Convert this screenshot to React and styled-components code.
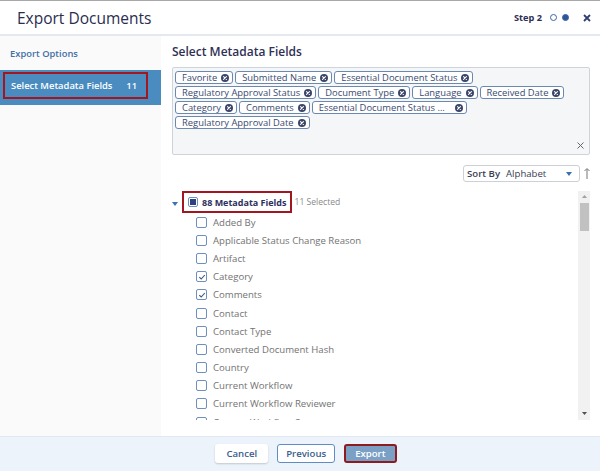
import React from "react";
import styled, { createGlobalStyle, css } from "styled-components";

const GlobalStyle = createGlobalStyle`
  html, body { margin: 0; padding: 0; background: #fff; }
  body { font-family: "Open Sans", "Noto Sans", sans-serif; }
  * { box-sizing: border-box; }
`;

const Dialog = styled.div`
  width: 600px;
  height: 471px;
  display: flex;
  flex-direction: column;
  border-top: 1px solid #a8a8a8;
  overflow: hidden;
  background: #fff;
`;

const Header = styled.header`
  height: 35px;
  flex-shrink: 0;
  display: flex;
  align-items: center;
  padding: 0 9px 0 17px;
  border-bottom: 2px solid #e4e9ef;
`;

const Title = styled.h1`
  margin: 0;
  flex: 1;
  font-size: 15.5px;
  font-weight: 400;
  color: #2b2d50;
`;

const StepInfo = styled.div`
  display: flex;
  align-items: center;
  gap: 5px;
  font-size: 9.2px;
  font-weight: 700;
  color: #2d2f55;
`;

const Dot = styled.span`
  width: 7px;
  height: 7px;
  border-radius: 50%;
  border: 1px solid #3a66a8;
  background: ${(p) => (p.$filled ? "#2f5597" : "#fff")};
  margin-left: ${(p) => (p.$first ? "3px" : "0")};
`;

const CloseButton = styled.span`
  display: flex;
  margin-left: 14px;
`;

const Body = styled.div`
  height: 400px;
  flex-shrink: 0;
  display: flex;
`;

const Sidebar = styled.nav`
  width: 161px;
  flex-shrink: 0;
  background: #fafafa;
  display: flex;
  flex-direction: column;
`;

const NavItem = styled.div`
  height: ${(p) => (p.$active ? "35px" : "34px")};
  display: flex;
  align-items: center;
  padding-left: 10px;
  font-size: 9.4px;
  font-weight: 600;
  color: #3f70a6;
  ${(p) =>
    p.$active &&
    css`
      background: #4a8cc0;
      color: #fff;
      padding: 2px 13px 6px 3px;
      align-items: stretch;
    `}
`;

const ActiveOutline = styled.div`
  flex: 1;
  display: flex;
  align-items: center;
  justify-content: space-between;
  padding: 0 9px 0 6px;
  border: 2px solid #a3151f;
`;

const Main = styled.main`
  flex: 1;
  display: flex;
  flex-direction: column;
  padding: 7px 10px 0 11px;
`;

const SectionTitle = styled.h2`
  margin: 0;
  height: 18px;
  line-height: 18px;
  font-size: 12px;
  font-weight: 600;
  color: #2f3055;
`;

const TagBox = styled.div`
  margin-top: 6px;
  height: 88px;
  position: relative;
  background: #f5f6f8;
  border: 1px solid #cfd4db;
  border-radius: 2px;
  padding: 3px 2px;
  display: flex;
  flex-wrap: wrap;
  align-content: flex-start;
  gap: 2px 2px;
`;

const Tag = styled.span`
  height: 13px;
  display: inline-flex;
  align-items: center;
  gap: 4px;
  padding: 0 3px 0 6px;
  border: 1px solid #6b88b0;
  border-radius: 3px;
  background: #fff;
  font-size: 9.4px;
  line-height: 11px;
  color: #3a4a70;
  white-space: nowrap;
`;

const TagRemove = styled.svg`
  width: 8px;
  height: 8px;
  flex-shrink: 0;
  margin-left: ${(p) => (p.$wide ? "6px" : "0")};
`;

const ClearAll = styled.svg`
  position: absolute;
  right: 5px;
  bottom: 5px;
  width: 7px;
  height: 7px;
`;

const SortRow = styled.div`
  margin-top: 10px;
  display: flex;
  justify-content: flex-end;
  align-items: center;
  gap: 4px;
`;

const SortSelect = styled.div`
  width: 117px;
  height: 17px;
  display: flex;
  align-items: center;
  padding: 0 7px 0 3px;
  border: 1px solid #ccd1d8;
  border-radius: 3px;
  font-size: 9.6px;
  color: #3a3d55;
`;

const SortLabel = styled.span`
  font-weight: 600;
  margin-right: 6px;
`;

const SortValue = styled.span`
  flex: 1;
`;

const Tree = styled.div`
  margin-top: 9px;
  height: 229px;
  display: flex;
  overflow: hidden;
`;

const TreeList = styled.div`
  flex: 1;
  overflow: hidden;
`;

const TreeRoot = styled.div`
  height: 22px;
  display: flex;
  align-items: center;
`;

const Caret = styled.svg`
  width: 6px;
  height: 4px;
  margin: 3px 4px 0 0;
`;

const RootOutline = styled.div`
  height: 22px;
  display: flex;
  align-items: center;
  gap: 4px;
  padding: 0 3px 0 4px;
  border: 2px solid #a3151f;
`;

const RootLabel = styled.span`
  font-size: 9px;
  font-weight: 700;
  color: #2e2f60;
`;

const Selected = styled.span`
  margin-left: 3px;
  font-size: 8.6px;
  color: #8a8a8a;
`;

const Item = styled.div`
  height: 18.2px;
  display: flex;
  align-items: center;
  gap: 6px;
  padding-left: 24px;
  font-size: 9.6px;
  color: #737373;
`;

const Box = styled.span`
  width: ${(p) => (p.$small ? "10px" : "11px")};
  height: ${(p) => (p.$small ? "10px" : "11px")};
  flex-shrink: 0;
  border: 1px solid #6f8fbd;
  border-radius: 2px;
  background: #fff;
  display: flex;
  align-items: center;
  justify-content: center;
`;

const Indeterminate = styled.span`
  width: 6px;
  height: 6px;
  background: #2f4080;
`;

const Scrollbar = styled.div`
  width: 12px;
  flex-shrink: 0;
  background: #f1f1f1;
  display: flex;
  flex-direction: column;
  align-items: center;
  padding: 4px 0 5px;
`;

const Thumb = styled.div`
  width: 9px;
  height: 28px;
  margin-top: 5px;
  background: #c1c1c1;
`;

const Spacer = styled.div`
  flex: 1;
`;

const Footer = styled.footer`
  flex: 1;
  background: #edf3fa;
  border-top: 1px solid #e1e8f1;
  display: flex;
  justify-content: center;
  align-items: center;
  gap: 9px;
  padding: 0 0 2px 12px;
`;

const Button = styled.button`
  height: 19px;
  padding: 0 ${(p) => p.$pad || 10}px;
  font-family: inherit;
  font-size: 9.6px;
  font-weight: 600;
  border-radius: 3px;
  color: #3b5d8c;
  background: #fff;
  border: 1px solid transparent;
  box-shadow: 0 1px 2px rgba(0, 0, 0, 0.18);
  ${(p) =>
    p.$variant === "outline" &&
    css`
      border-color: #5f8cc4;
      box-shadow: none;
    `}
  ${(p) =>
    p.$variant === "primary" &&
    css`
      background: #7aa0c6;
      color: #fff;
      border: 2px solid #8e1b20;
      box-shadow: none;
    `}
`;

const RemoveIcon = ({ wide }) => (
  <TagRemove viewBox="0 0 10 10" $wide={wide}>
    <circle cx="5" cy="5" r="5" fill="#3b4669" />
    <path d="M3.2 3.2 L6.8 6.8 M6.8 3.2 L3.2 6.8" stroke="#fff" strokeWidth="1.4" strokeLinecap="round" />
  </TagRemove>
);

const Check = () => (
  <svg width="8" height="8" viewBox="0 0 8 8">
    <path d="M1.3 4.2 L3.2 6 L6.8 2" fill="none" stroke="#3d4f80" strokeWidth="1.1" />
  </svg>
);

const tags = [
  "Favorite",
  "Submitted Name",
  "Essential Document Status",
  "Regulatory Approval Status",
  "Document Type",
  "Language",
  "Received Date",
  "Category",
  "Comments",
  "Essential Document Status ...",
  "Regulatory Approval Date",
];

const fields = [
  ["Added By", false],
  ["Applicable Status Change Reason", false],
  ["Artifact", false],
  ["Category", true],
  ["Comments", true],
  ["Contact", false],
  ["Contact Type", false],
  ["Converted Document Hash", false],
  ["Country", false],
  ["Current Workflow", false],
  ["Current Workflow Reviewer", false],
  ["Current Workflow Step", false],
];

export default function App() {
  return (
    <>
      <GlobalStyle />
      <Dialog>
        <Header>
          <Title>Export Documents</Title>
          <StepInfo>
            Step 2
            <Dot $first />
            <Dot $filled />
          </StepInfo>
          <CloseButton>
            <svg width="8" height="8" viewBox="0 0 8 8">
              <path d="M1 1 L7 7 M7 1 L1 7" stroke="#2f3f6e" strokeWidth="1.8" />
            </svg>
          </CloseButton>
        </Header>

        <Body>
          <Sidebar>
            <NavItem>Export Options</NavItem>
            <NavItem $active>
              <ActiveOutline>
                <span>Select Metadata Fields</span>
                <span>11</span>
              </ActiveOutline>
            </NavItem>
          </Sidebar>

          <Main>
            <SectionTitle>Select Metadata Fields</SectionTitle>
            <TagBox>
              {tags.map((t) => (
                <Tag key={t}>
                  {t}
                  <RemoveIcon wide={t.endsWith("...")} />
                </Tag>
              ))}
              <ClearAll viewBox="0 0 7 7">
                <path d="M0.5 0.5 L6.5 6.5 M6.5 0.5 L0.5 6.5" stroke="#666" strokeWidth="1" />
              </ClearAll>
            </TagBox>

            <SortRow>
              <SortSelect>
                <SortLabel>Sort By</SortLabel>
                <SortValue>Alphabet</SortValue>
                <svg width="6" height="4" viewBox="0 0 6 4">
                  <path d="M0 0 H6 L3 4 Z" fill="#3a6fb0" />
                </svg>
              </SortSelect>
              <svg width="6" height="11" viewBox="0 0 6 11">
                <path d="M3 1 V11" stroke="#777" strokeWidth="1" />
                <path d="M0.5 3 L3 0.5 L5.5 3" fill="none" stroke="#777" strokeWidth="1" />
              </svg>
            </SortRow>

            <Tree>
              <TreeList>
                <TreeRoot>
                  <Caret viewBox="0 0 6 4">
                    <path d="M0 0 H6 L3 4 Z" fill="#3a72b2" />
                  </Caret>
                  <RootOutline>
                    <Box $small>
                      <Indeterminate />
                    </Box>
                    <RootLabel>88 Metadata Fields</RootLabel>
                  </RootOutline>
                  <Selected>11 Selected</Selected>
                </TreeRoot>
                {fields.map(([name, checked]) => (
                  <Item key={name}>
                    <Box>{checked && <Check />}</Box>
                    {name}
                  </Item>
                ))}
              </TreeList>
              <Scrollbar>
                <svg width="5" height="3" viewBox="0 0 5 3">
                  <path d="M0 3 H5 L2.5 0 Z" fill="#a0a0a0" />
                </svg>
                <Thumb />
                <Spacer />
                <svg width="5" height="3" viewBox="0 0 5 3">
                  <path d="M0 0 H5 L2.5 3 Z" fill="#505050" />
                </svg>
              </Scrollbar>
            </Tree>
          </Main>
        </Body>

        <Footer>
          <Button $pad={10}>Cancel</Button>
          <Button $variant="outline" $pad={8}>Previous</Button>
          <Button $variant="primary" $pad={9}>Export</Button>
        </Footer>
      </Dialog>
    </>
  );
}
